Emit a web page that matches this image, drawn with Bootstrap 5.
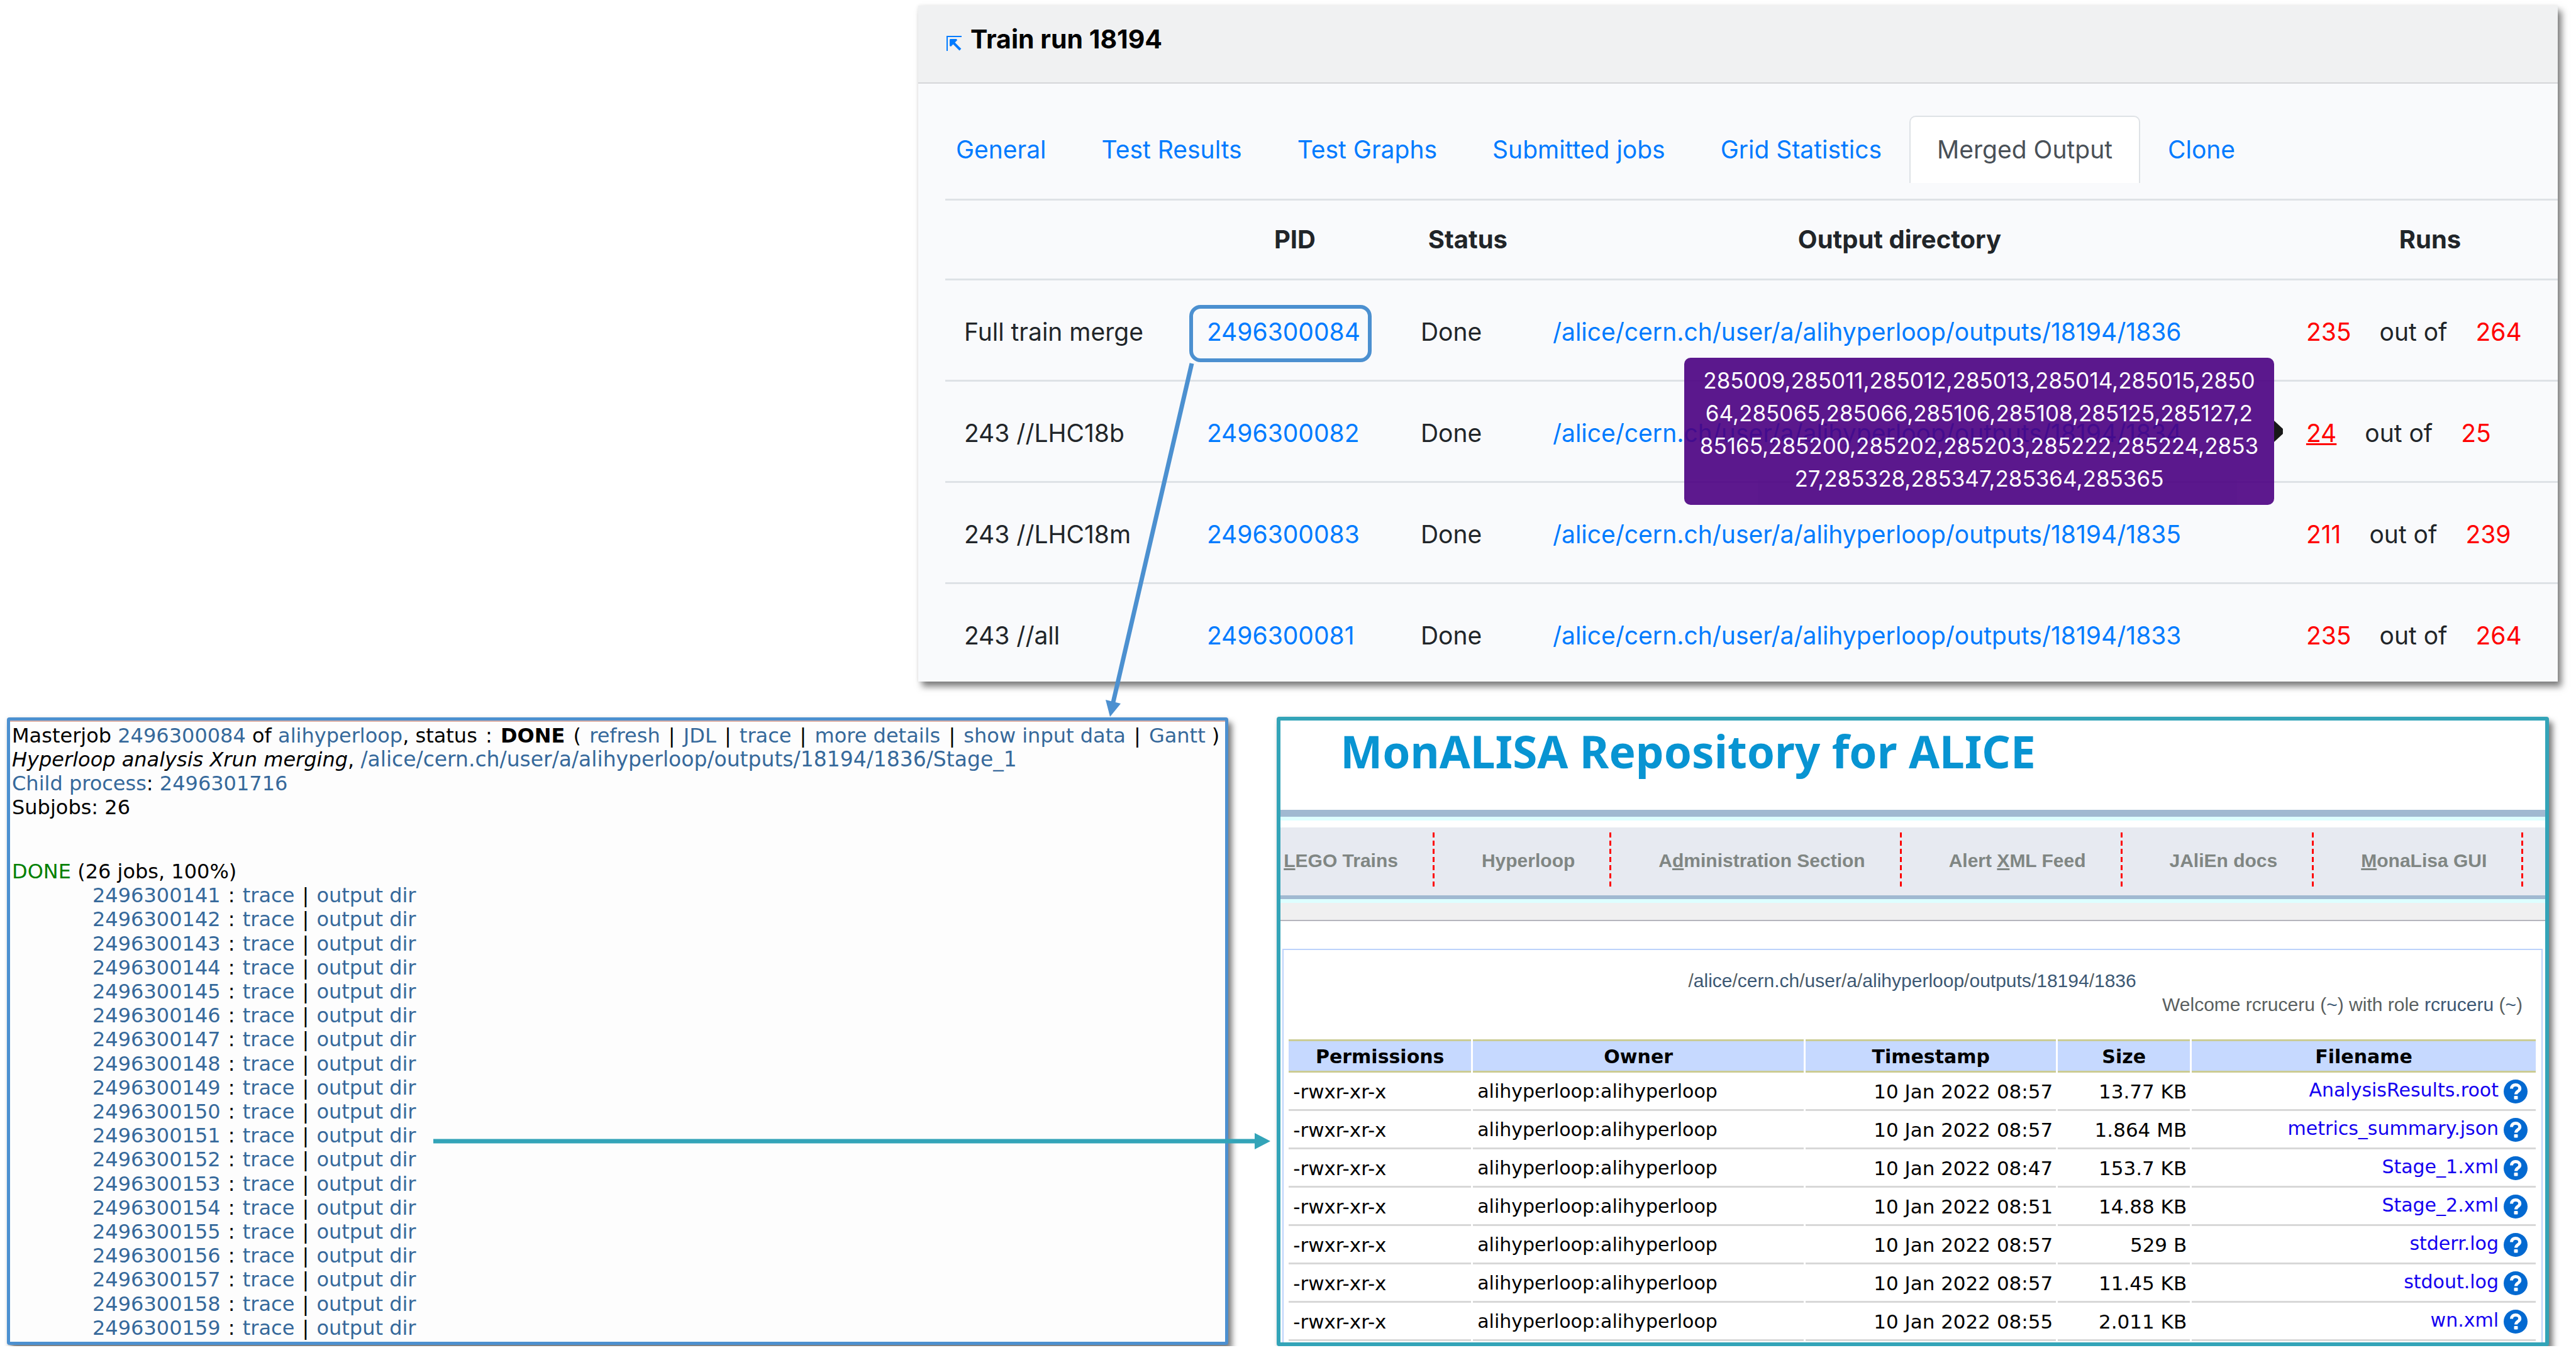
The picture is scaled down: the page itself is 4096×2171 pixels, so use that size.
<!DOCTYPE html>
<html lang="en">
<head>
<meta charset="utf-8">
<meta name="viewport" content="width=device-width, initial-scale=1">
<title>Train run 18194</title>
<link href="https://cdn.jsdelivr.net/npm/bootstrap@5.3.0/dist/css/bootstrap.min.css" rel="stylesheet">
<style>
  body { background: #fff; color: #000; }
  a { text-decoration: none; }
  .board { padding: 9px 43px 0 11px; overflow: hidden; }
  .shot { box-shadow: 6px 8px 10px rgba(0, 0, 0, .5), 0 0 6px rgba(0, 0, 0, .08); }

  /* train run window */
  .train { width: 64.5%; margin: 0 -14px 56px auto; background: #f9fafc; font: 39px/60px Inter, sans-serif; color: #212529; }
  .train a { color: #007bff; }
  .train-head { gap: 14px; padding: 23px 45px 39px; background: #f0f1f2; border-bottom: 2px solid #d5d6d9; }
  .train-head svg { margin-top: 14px; }
  .train-head h1 { font: 700 41px/60px Inter, sans-serif; color: #000; }
  .train-tabs { padding: 51px 16px 26px; }
  .train-tabs .nav-link { padding: 22px 42px 23px; border: 2px solid transparent; border-bottom: 0; border-radius: 10px 10px 0 0; }
  .train-tabs .nav-link.active { background: #fff; border-color: #dee2e6; color: #495057; }
  .train-clip { padding-left: 43px; overflow: hidden; }
  .merge-table { table-layout: fixed; width: 100%; margin: 0; color: inherit; }
  .merge-table > thead > tr > th { padding: 32px 30px; border: 0; border-top: 3px solid #dee2e6; font: 700 40px/60px Inter, sans-serif; text-align: center; background: none; color: inherit; }
  .merge-table > tbody > tr > td { padding: 52px 0 46px 30px; border: 0; border-top: 3px solid #dee2e6; background: none; color: inherit; white-space: nowrap; }
  .merge-table > tbody > tr:last-child > td { padding-bottom: 43px; }
  .merge-table > thead > tr > th:last-child { padding-left: 59px; padding-right: 0; }
  .merge-table > tbody > tr > td:last-child { padding-left: 65px; }
  .merge-table > thead > tr > th:nth-child(3) { padding-left: 0; padding-right: 0; }
  .c-name { width: 386px; } .c-pid { width: 340px; } .c-status { width: 210px; } .c-dir { width: 1163px; }
  .run-cell { gap: 45px; }
  .train .run-count { color: #f00; }
  .picked { position: relative; display: inline-block; }
  .picked::after { content: ""; position: absolute; inset: -13px -18px -18px -28px; border: 6px solid #4c90d0; border-radius: 18px; }
  .run-tip { position: absolute; right: 100%; top: 50%; transform: translateY(-50%); width: 938px; margin: -3px 51px 0 0; padding: 10px 0 16px; border-radius: 10px; background: #4b0082; color: #fff; font-size: 35px; line-height: 52px; text-align: center; opacity: .9; z-index: 3; }
  .run-tip::after { content: ""; position: absolute; left: 100%; top: 50%; width: 14px; height: 34px; margin-top: -17px; background: #000; clip-path: polygon(0 0, 100% 38%, 100% 62%, 0 100%); }

  .lower { gap: 77px; }

  /* master job window */
  .job { flex: 1943 1 0; margin: 1px 0 2px; border: 5px solid #4c90d0; border-radius: 4px; background: #fdfdfd; font: 32px/38px "DejaVu Sans", sans-serif; }
  .job-body { border-top: 2px solid #dbb0a6; padding: 3px 1px 3px 3px; }
  .job a { color: #36699b; }
  .job p { margin: 0; white-space: nowrap; }
  .job-path { font-size: 33px; }
  .sep { margin: 0 3px; }
  .job-list { margin: 64px 0 0; }
  .job-list .sep { margin: 0 2px; }
  .job-list li + li { padding-left: 128px; }
  .done-mark { color: #008000; }

  /* repository window */
  .repo { flex: 2022 1 0; border: 6px solid #33a4b8; border-radius: 4px; background: #fff; font-family: "Liberation Sans", sans-serif; }
  .repo-title { margin: 0; padding: 9px 95px 53px; font: 700 71px/80px "Noto Sans", sans-serif; color: #0894d2; border-bottom: 11px solid #a0b9d1; }
  .pale-line { height: 6px; background: #dff; }
  .repo-menu { margin-top: 11px; padding: 8px 0 11px; background: #e7eaf1; border-bottom: 6px solid #a0b9d1; font: 700 30px/40px "Liberation Sans", sans-serif; }
  .repo-menu li { padding: 25px 58px 24px 75px; background: repeating-linear-gradient(#f00 0 8px, transparent 8px 13px) right / 3px 100% no-repeat; }
  .repo-menu li:first-child { padding-left: 5px; }
  .repo-menu a { color: #808683; }
  .repo-strip { height: 29px; background: #f0f0f0; border-bottom: 2px solid #b5b5bd; }
  .repo-box { margin: 44px 4px 0 3px; padding: 30px 6px 2px 5px; border: 2px solid #bcd2fb; border-bottom: 0; font-size: 30px; line-height: 38px; color: #5a5f60; }
  .repo-box p { margin: 0; }
  .repo-box p a { color: #3c5874; }
  .role-line { padding-right: 24px; text-align: right; }
  .file-table { table-layout: fixed; width: 100%; margin: 36px 0 0; border-collapse: separate; border-spacing: 3px 0; font: 31px/40px "DejaVu Sans", sans-serif; color: #000; }
  .file-table > thead > tr > th { padding: 5px 0 2px; border: 0 solid #cbcc94; border-width: 3px 0; background: #c6d9ff; color: #000; font: 700 30px/40px "DejaVu Sans", sans-serif; text-align: center; }
  .file-table > tbody > tr > td { padding: 10px 5px 8px 7px; border: 0 solid #d8d8d8; border-bottom-width: 3px; background: none; color: #000; white-space: nowrap; }
  .file-table > tbody > tr > td:nth-child(2) { font-size: 30px; }
  .file-table > tbody > tr > td:nth-child(3), .file-table > tbody > tr > td:nth-child(4) { text-align: right; }
  .file-table > tbody > tr > td:last-child { padding: 11px 13px 9px 0; font-size: 30px; line-height: 34px; }
  .file-table a { color: #1400f0; }
  .f-perm { width: 290px; } .f-owner { width: 526px; } .f-time { width: 398px; } .f-size { width: 210px; }
  .help { display: block; width: 38px; height: 38px; margin-left: 8px; }

  /* arrows that link the windows */
  .links-layer { position: absolute; left: 0; top: 0; width: 100%; height: 100%; pointer-events: none; z-index: 5; }
</style>
</head>
<body>
<main class="board position-relative">
  <section class="train shot">
    <header class="train-head d-flex align-items-center">
      <a href="#" aria-label="Open train run"><svg class="d-block" width="24" height="24" viewBox="0 0 24 24" fill="none" stroke="#007bff"><path d="M1 24V1H24" stroke-width="2"/><path d="M9 9L22 22" stroke-width="4"/><path d="M6 5H16L17 7L7 17L5 16V6Z" fill="#007bff" stroke="none"/></svg></a>
      <h1 class="m-0">Train run 18194</h1>
    </header>
    <ul class="train-tabs nav nav-tabs border-0 flex-nowrap">
      <li class="nav-item"><a class="nav-link" href="#">General</a></li>
      <li class="nav-item"><a class="nav-link" href="#">Test Results</a></li>
      <li class="nav-item"><a class="nav-link" href="#">Test Graphs</a></li>
      <li class="nav-item"><a class="nav-link" href="#">Submitted jobs</a></li>
      <li class="nav-item"><a class="nav-link" href="#">Grid Statistics</a></li>
      <li class="nav-item"><a class="nav-link active" aria-current="page" href="#">Merged Output</a></li>
      <li class="nav-item"><a class="nav-link" href="#">Clone</a></li>
    </ul>
    <div class="train-clip">
      <table class="table merge-table">
        <colgroup><col class="c-name"><col class="c-pid"><col class="c-status"><col class="c-dir"><col></colgroup>
        <thead><tr><th></th><th>PID</th><th>Status</th><th>Output directory</th><th>Runs</th></tr></thead>
        <tbody>
          <tr><td>Full train merge</td><td><a class="picked" href="#">2496300084</a></td><td>Done</td><td><a href="#">/alice/cern.ch/user/a/alihyperloop/outputs/18194/1836</a></td>
            <td><div class="run-cell d-flex"><a class="run-count" href="#">235</a><span>out of</span><a class="run-count" href="#">264</a></div></td></tr>
          <tr><td>243 //LHC18b</td><td><a href="#">2496300082</a></td><td>Done</td><td><a href="#">/alice/cern.ch/user/a/alihyperloop/outputs/18194/1834</a></td>
            <td><div class="run-cell d-flex"><span class="position-relative"><a class="run-count text-decoration-underline" href="#">24</a><span class="run-tip" role="tooltip">285009,285011,285012,285013,285014,285015,2850<br>64,285065,285066,285106,285108,285125,285127,2<br>85165,285200,285202,285203,285222,285224,2853<br>27,285328,285347,285364,285365</span></span><span>out of</span><a class="run-count" href="#">25</a></div></td></tr>
          <tr><td>243 //LHC18m</td><td><a href="#">2496300083</a></td><td>Done</td><td><a href="#">/alice/cern.ch/user/a/alihyperloop/outputs/18194/1835</a></td>
            <td><div class="run-cell d-flex"><a class="run-count" href="#">211</a><span>out of</span><a class="run-count" href="#">239</a></div></td></tr>
          <tr><td>243 //all</td><td><a href="#">2496300081</a></td><td>Done</td><td><a href="#">/alice/cern.ch/user/a/alihyperloop/outputs/18194/1833</a></td>
            <td><div class="run-cell d-flex"><a class="run-count" href="#">235</a><span>out of</span><a class="run-count" href="#">264</a></div></td></tr>
        </tbody>
      </table>
    </div>
  </section>

  <div class="lower d-flex">
    <section class="job shot d-flex flex-column">
      <div class="job-body d-flex flex-column flex-grow-1">
        <p>Masterjob <a href="#">2496300084</a> of <a href="#">alihyperloop</a>, status <span class="sep">:</span> <b>DONE</b> <span class="sep">(</span> <a href="#">refresh</a> <span class="sep">|</span> <a href="#">JDL</a> <span class="sep">|</span> <a href="#">trace</a> <span class="sep">|</span> <a href="#">more details</a> <span class="sep">|</span> <a href="#">show input data</a> <span class="sep">|</span> <a href="#">Gantt</a> )</p>
        <p><i>Hyperloop analysis Xrun merging</i>, <a class="job-path" href="#">/alice/cern.ch/user/a/alihyperloop/outputs/18194/1836/Stage_1</a></p>
        <p><a href="#">Child process</a>: <a href="#">2496301716</a></p>
        <p>Subjobs: 26</p>
        <ul class="job-list list-unstyled d-flex flex-column justify-content-between flex-grow-1" id="jobs">
          <li><span class="done-mark">DONE</span> (26 jobs, 100%)</li>
        </ul>
      </div>
    </section>

    <section class="repo shot">
      <h2 class="repo-title">MonALISA Repository for ALICE</h2>
      <div class="pale-line"></div>
      <ul class="repo-menu list-unstyled d-flex mb-0 text-nowrap">
        <li><a href="#"><u>L</u>EGO Trains</a></li>
        <li><a href="#">Hyperloop</a></li>
        <li><a href="#">A<u>d</u>ministration Section</a></li>
        <li><a href="#">Alert <u>X</u>ML Feed</a></li>
        <li><a href="#">JAliEn docs</a></li>
        <li><a href="#"><u>M</u>onaLisa GUI</a></li>
      </ul>
      <div class="pale-line"></div>
      <div class="repo-strip"></div>
      <div class="repo-box">
        <p class="text-center">/<a href="#">alice</a>/<a href="#">cern.ch</a>/<a href="#">user</a>/<a href="#">a</a>/<a href="#">alihyperloop</a>/<a href="#">outputs</a>/<a href="#">18194</a>/<a href="#">1836</a></p>
        <p class="role-line">Welcome rcruceru (<a href="#">~</a>) with role <a href="#">rcruceru</a> (<a href="#">~</a>)</p>
        <table class="table file-table">
          <colgroup><col class="f-perm"><col class="f-owner"><col class="f-time"><col class="f-size"><col></colgroup>
          <thead><tr><th>Permissions</th><th>Owner</th><th>Timestamp</th><th>Size</th><th>Filename</th></tr></thead>
          <tbody id="files"></tbody>
        </table>
      </div>
    </section>
  </div>

  <svg class="links-layer" aria-hidden="true">
    <path d="M1895 578L1770 1117" stroke="#4c90d0" stroke-width="7"/>
    <path d="M1758 1113L1782 1119L1765 1140Z" fill="#4c90d0"/>
    <path d="M689 1815H1998" stroke="#33a4b8" stroke-width="7"/>
    <path d="M1995 1802L2020 1815L1995 1828Z" fill="#33a4b8"/>
  </svg>
</main>
<script>
  const jobs = document.getElementById('jobs');
  for (let id = 141; id <= 159; id++) {
    jobs.insertAdjacentHTML('beforeend', `<li><a href="#">2496300${id}</a> <span class="sep">:</span> <a href="#">trace</a> <span class="sep">|</span> <a href="#">output dir</a></li>`);
  }
  const files = [
    ['08:57', '13.77 KB', 'AnalysisResults.root'],
    ['08:57', '1.864 MB', 'metrics_summary.json'],
    ['08:47', '153.7 KB', 'Stage_1.xml'],
    ['08:51', '14.88 KB', 'Stage_2.xml'],
    ['08:57', '529 B', 'stderr.log'],
    ['08:57', '11.45 KB', 'stdout.log'],
    ['08:55', '2.011 KB', 'wn.xml']
  ];
  const help = '<svg class="help" viewBox="0 0 38 38" aria-hidden="true"><circle cx="19" cy="19" r="19" fill="#0369d1"/><path d="M12.5 14.5C12.5 10.5 15.5 8.5 19 8.5C22.8 8.5 25.7 10.8 25.7 14.2C25.7 19 19.5 18.6 19.5 23.5" fill="none" stroke="#fff" stroke-width="5"/><rect x="16.5" y="26" width="6" height="5.5" rx="1" fill="#fff"/></svg>';
  document.getElementById('files').innerHTML = files.map(([time, size, name]) =>
    `<tr><td>-rwxr-xr-x</td><td>alihyperloop:alihyperloop</td><td>10 Jan 2022 ${time}</td><td>${size}</td><td><div class="d-flex justify-content-end align-items-start"><a href="#">${name}</a>${help}</div></td></tr>`).join('');
</script>
<script src="https://cdn.jsdelivr.net/npm/bootstrap@5.3.0/dist/js/bootstrap.bundle.min.js"></script>
</body>
</html>
